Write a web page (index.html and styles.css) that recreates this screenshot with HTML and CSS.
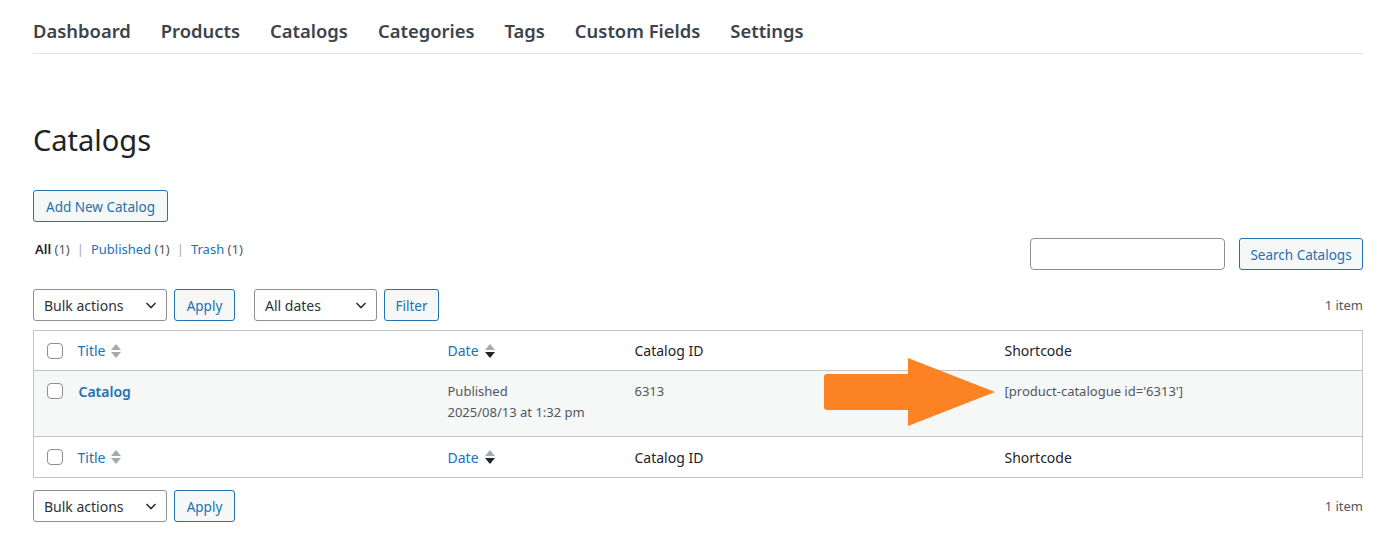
FILE: index.html
```html
<!DOCTYPE html>
<html lang="en">
<head>
<meta charset="utf-8">
<title>Catalogs</title>
<link rel="stylesheet" href="styles.css">
</head>
<body>
<div class="wrap">
  <nav class="topnav">
    <a href="#">Dashboard</a>
    <a href="#">Products</a>
    <a href="#">Catalogs</a>
    <a href="#">Categories</a>
    <a href="#">Tags</a>
    <a href="#">Custom Fields</a>
    <a href="#">Settings</a>
  </nav>

  <h1 class="page-title">Catalogs</h1>
  <a class="btn btn-add" href="#">Add New Catalog</a>

  <div class="filters-row">
    <ul class="subsubsub">
      <li><span class="current">All</span> <span class="count">(1)</span></li>
      <li class="sep">|</li>
      <li><a href="#">Published <span class="count">(1)</span></a></li>
      <li class="sep">|</li>
      <li><a href="#">Trash <span class="count">(1)</span></a></li>
    </ul>
    <div class="search-box">
      <input class="search-input" type="search">
      <button class="btn btn-search">Search Catalogs</button>
    </div>
  </div>

  <div class="tablenav top">
    <div class="select"><span>Bulk actions</span><svg viewBox="0 0 16 16" class="chev"><path d="M3.5 6l4.5 4.5 4.5-4.5" fill="none" stroke="#2c3338" stroke-width="1.6"/></svg></div>
    <button class="btn btn-apply">Apply</button>
    <div class="select select-dates"><span>All dates</span><svg viewBox="0 0 16 16" class="chev"><path d="M3.5 6l4.5 4.5 4.5-4.5" fill="none" stroke="#2c3338" stroke-width="1.6"/></svg></div>
    <button class="btn btn-filter">Filter</button>
    <span class="items">1 item</span>
  </div>

  <div class="table-wrap">
    <table class="list">
      <colgroup>
        <col class="c-cb"><col class="c-title"><col class="c-date"><col class="c-id"><col class="c-short">
      </colgroup>
      <thead>
        <tr>
          <td class="cb"><span class="checkbox"></span></td>
          <th><a href="#" class="sort">Title <span class="arrows"><i class="up"></i><i class="down"></i></span></a></th>
          <th><a href="#" class="sort">Date <span class="arrows"><i class="up"></i><i class="down active"></i></span></a></th>
          <th>Catalog ID</th>
          <th>Shortcode</th>
        </tr>
      </thead>
      <tbody>
        <tr>
          <td class="cb"><span class="checkbox"></span></td>
          <td><a href="#" class="row-title">Catalog</a></td>
          <td>Published<br>2025/08/13 at 1:32 pm</td>
          <td>6313</td>
          <td>[product-catalogue id='6313']</td>
        </tr>
      </tbody>
      <tfoot>
        <tr>
          <td class="cb"><span class="checkbox"></span></td>
          <th><a href="#" class="sort">Title <span class="arrows"><i class="up"></i><i class="down"></i></span></a></th>
          <th><a href="#" class="sort">Date <span class="arrows"><i class="up"></i><i class="down active"></i></span></a></th>
          <th>Catalog ID</th>
          <th>Shortcode</th>
        </tr>
      </tfoot>
    </table>
    <svg class="arrow" viewBox="0 0 172 70" width="172" height="70">
      <path d="M3 17 H84 V1 L171 35 L84 69 V53 H3 Q0 53 0 50 V20 Q0 17 3 17 Z" fill="#fd8224"/>
    </svg>
  </div>

  <div class="tablenav bottom">
    <div class="select"><span>Bulk actions</span><svg viewBox="0 0 16 16" class="chev"><path d="M3.5 6l4.5 4.5 4.5-4.5" fill="none" stroke="#2c3338" stroke-width="1.6"/></svg></div>
    <button class="btn btn-apply">Apply</button>
    <span class="items">1 item</span>
  </div>
</div>
</body>
</html>
```

FILE: styles.css
```css
* { box-sizing: border-box; }
body {
  margin: 0;
  background: #fff;
  font-family: "Noto Sans", "Open Sans", sans-serif;
  color: #3c434a;
  font-size: 13px;
}
a { text-decoration: none; color: #2271b1; }
.wrap { padding: 0 36px 0 33px; }

.topnav {
  display: flex;
  gap: 30px;
  height: 54px;
  padding-top: 17px;
  border-bottom: 1px solid #e2e4e7;
}
.topnav a {
  color: #3c434a;
  font-size: 18.4px;
  font-weight: 600;
  line-height: 28px;
}

.page-title {
  margin: 66px 0 0;
  font-size: 29px;
  font-weight: 400;
  line-height: 40px;
  color: #1d2327;
}

.btn {
  display: inline-flex;
  align-items: center;
  justify-content: center;
  height: 32px;
  padding: 1px 0 0;
  border: 1px solid #2271b1;
  border-radius: 3px;
  background: #f6f7f7;
  color: #2271b1;
  font-family: inherit;
  font-size: 13.5px;
  line-height: 20px;
  white-space: nowrap;
}
.btn-add { margin-top: 30px; width: 135px; }
.btn-search { width: 124px; }
.btn-apply { width: 61px; }
.btn-filter { width: 55px; }

.filters-row {
  display: flex;
  justify-content: space-between;
  align-items: flex-start;
  margin-top: 16px;
}
.subsubsub {
  list-style: none;
  margin: 0;
  padding: 0 0 0 2px;
  display: flex;
  gap: 7px;
  font-size: 13px;
  line-height: 22px;
  color: #50575e;
}
.subsubsub .current { color: #1d2327; font-weight: 600; }
.subsubsub .count { color: #50575e; }
.subsubsub .sep { color: #a7aaad; }
.search-box { display: flex; gap: 14px; }
.search-input {
  width: 195px;
  height: 32px;
  border: 1px solid #8c8f94;
  border-radius: 4px;
  background: #fff;
}

.tablenav {
  display: flex;
  align-items: center;
  gap: 7px;
  margin-top: 19px;
  height: 32px;
}
.tablenav.bottom { margin-top: 12px; }
.select {
  display: flex;
  align-items: center;
  justify-content: space-between;
  width: 134px;
  height: 32px;
  padding: 0 7px 0 10px;
  border: 1px solid #8c8f94;
  border-radius: 3px;
  background: #fff;
  color: #2c3338;
  font-size: 14px;
}
.select-dates { width: 123px; margin-left: 12px; }
.chev { width: 16px; height: 16px; }
.items { margin-left: auto; color: #50575e; font-size: 13px; }

.table-wrap { position: relative; margin-top: 9px; }
.list {
  width: 100%;
  border-collapse: collapse;
  table-layout: fixed;
  border: 1px solid #c3c4c7;
  font-size: 13px;
}
.c-cb { width: 34px; }
.c-title { width: 370px; }
.c-date { width: 187px; }
.c-id { width: 370px; }
.list th {
  text-align: left;
  font-weight: 400;
  font-size: 14px;
  color: #1d2327;
  padding: 0 10px;
}
.list thead tr { border-bottom: 1px solid #c3c4c7; }
.list tfoot tr { border-top: 1px solid #c3c4c7; }
.list thead th, .list thead td { height: 40px; }
.list tfoot th, .list tfoot td { height: 41px; }
.list thead td.cb, .list tfoot td.cb { padding: 0 0 0 13px; vertical-align: middle; }
.list tbody tr { background: #f6f7f7; }
.list tbody td {
  vertical-align: top;
  padding: 10px 10px 0;
  height: 66px;
  color: #50575e;
  line-height: 21px;
}
.list tbody td.cb { padding: 12px 0 0 13px; }
.checkbox {
  display: block;
  width: 16px;
  height: 16px;
  border: 1px solid #8c8f94;
  border-radius: 4px;
  background: #fff;
}
.row-title {
  font-weight: 600;
  font-size: 14px;
  margin-left: 1px;
}
.sort { display: inline-flex; align-items: center; gap: 6px; color: #2271b1; }
.arrows { display: inline-flex; flex-direction: column; gap: 2px; }
.arrows i {
  display: block;
  width: 0; height: 0;
  border-left: 5px solid transparent;
  border-right: 5px solid transparent;
}
.arrows .up { border-bottom: 6px solid #a7aaad; }
.arrows .down { border-top: 6px solid #a7aaad; }
.arrows .down.active { border-top-color: #1d2327; }

.arrow {
  position: absolute;
  left: 791px;
  top: 27px;
}
```
